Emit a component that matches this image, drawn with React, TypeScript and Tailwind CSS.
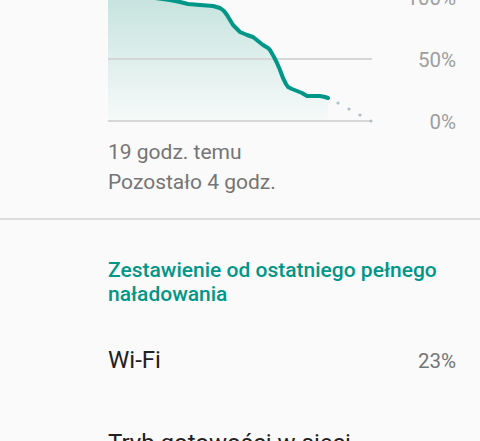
const line: [number, number][] = [
  [0, 11], [47, 12], [62, 14], [72, 16], [80, 18], [92, 19], [105, 20], [112, 22],
  [116, 25], [119, 29], [122, 34], [125, 39], [129, 43], [132, 46], [139, 49],
  [145, 51], [150, 55], [155, 59], [160, 62], [162, 64], [166, 71], [169, 77],
  [172, 84], [175, 92], [178, 98], [180, 101], [184, 103], [189, 105], [194, 107],
  [199, 110], [205, 110], [212, 110], [217, 111], [220, 112],
];

const pts = line.map(([x, y]) => `${x},${y}`).join(" ");

const BatteryChart = () => (
  <svg width="268" height="148" viewBox="0 0 268 148" className="shrink-0">
    <defs>
      <linearGradient id="fill" x1="0" y1="0" x2="0" y2="1">
        <stop offset="0" stopColor="#c6e3de" />
        <stop offset="1" stopColor="#f6faf9" />
      </linearGradient>
    </defs>
    <polygon points={`${pts} 220,135 0,135`} fill="url(#fill)" />
    <line x1="0" y1="11" x2="264" y2="11" stroke="#d9d9d9" strokeWidth="2" />
    <line x1="0" y1="73" x2="264" y2="73" stroke="#d6d6d6" strokeWidth="2" />
    <line x1="0" y1="135" x2="264" y2="135" stroke="#d6d6d6" strokeWidth="2" />
    <polyline
      points={pts}
      fill="none"
      stroke="#009688"
      strokeWidth="4"
      strokeLinejoin="round"
      strokeLinecap="round"
    />
    {[[230, 117], [241, 123], [252, 129], [263, 135]].map(([x, y]) => (
      <circle key={x} cx={x} cy={y} r="1.6" fill="#b0bec5" />
    ))}
  </svg>
);

export default function App() {
  return (
    <div
      className="w-[480px] h-[441px] overflow-hidden bg-[#fafafa]"
      style={{ fontFamily: "Roboto, 'Noto Sans', sans-serif" }}
    >
      <div className="-mt-[14px] flex pl-[108px] pr-[24px]">
        <BatteryChart />
        <div className="flex-1 h-[148px] flex flex-col justify-between text-right text-[20.5px] leading-[24px] text-[#9e9e9e]">
          <span>100%</span>
          <span>50%</span>
          <span>0%</span>
        </div>
      </div>

      <div className="pl-[108px] mt-[3px] text-[21px] leading-[30px] text-[#757575]">
        <p>19 godz. temu</p>
        <p>Pozostało 4 godz.</p>
      </div>

      <div className="mt-[21px] h-[2px] bg-[#dcdcdc]" />

      <h2 className="mt-[38px] pl-[108px] pr-[24px] text-[21px] leading-[24px] font-medium text-[#009688]">
        Zestawienie od ostatniego pełnego naładowania
      </h2>

      <div className="mt-[13px]">
        <div className="flex items-baseline justify-between pl-[108px] pr-[24px] py-[25px]">
          <span className="text-[24px] leading-[32px] text-[#212121]">Wi-Fi</span>
          <span className="text-[20.5px] text-[#757575]">23%</span>
        </div>
        <div className="flex items-baseline justify-between pl-[108px] pr-[24px] py-[25px]">
          <span className="text-[24px] leading-[32px] text-[#212121]">Tryb gotowości w sieci</span>
        </div>
      </div>
    </div>
  );
}
